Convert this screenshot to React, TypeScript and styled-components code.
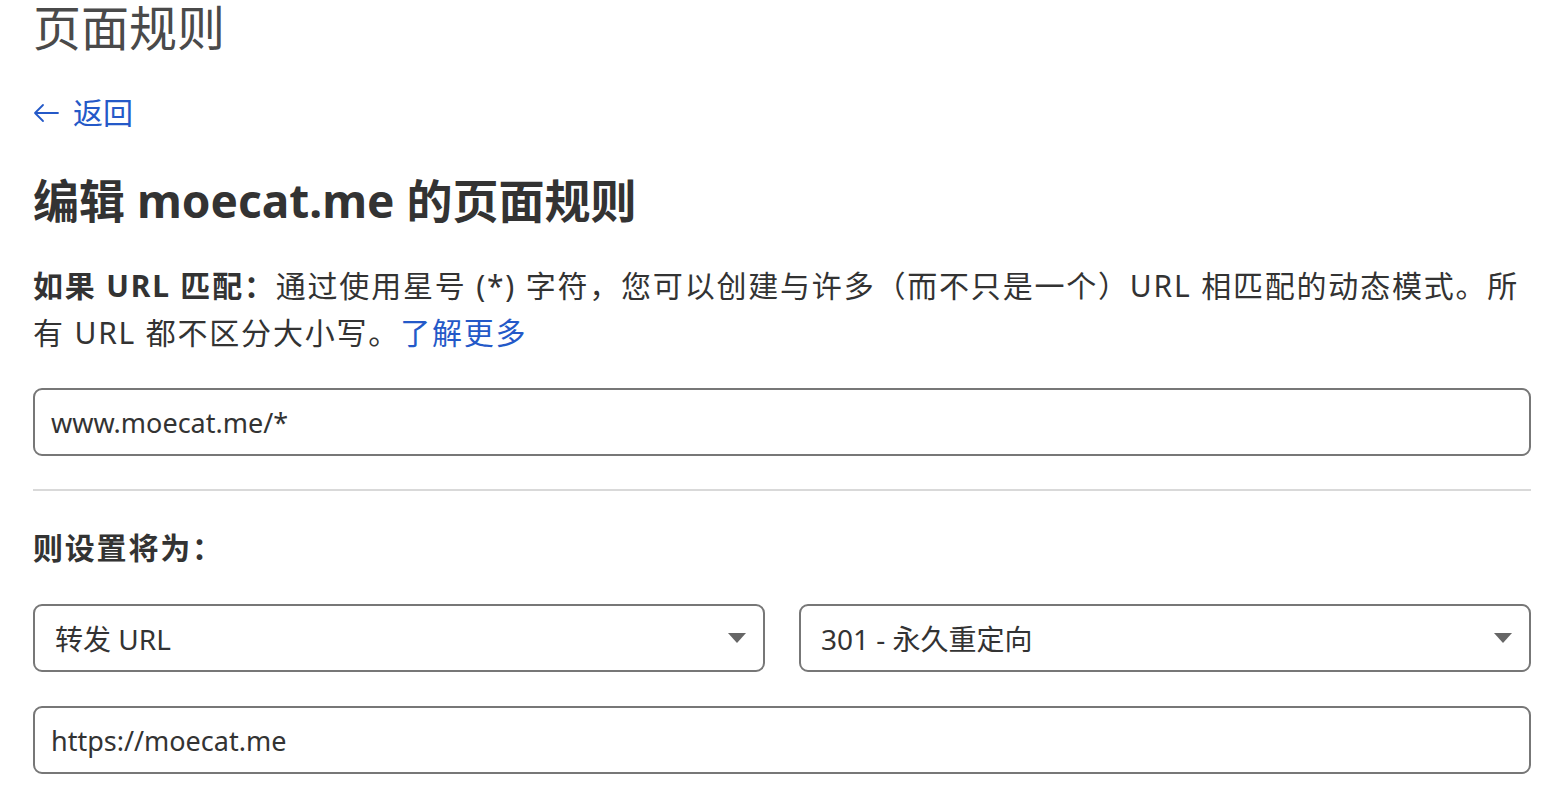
import styled, { createGlobalStyle } from "styled-components";

const GlobalStyle = createGlobalStyle`
  html, body {
    margin: 0;
    padding: 0;
    background: #ffffff;
  }
  body {
    font-family: "Noto Sans", "Noto Sans CJK SC", sans-serif;
    color: #333333;
  }
  * {
    box-sizing: border-box;
  }
`;

const Page = styled.div`
  padding: 0 15px 0 33px;
  display: flex;
  flex-direction: column;
`;

const PageTitle = styled.h1`
  margin: 0;
  font-size: 48px;
  line-height: 56px;
  font-weight: 400;
  color: #4a4a4a;
`;

const BackLink = styled.a`
  margin-top: 37px;
  display: flex;
  align-items: center;
  gap: 14px;
  font-size: 30px;
  line-height: 40px;
  color: #2459c8;
  text-decoration: none;
  cursor: pointer;
`;

const Heading = styled.h2`
  margin: 39px 0 0;
  font-size: 46px;
  line-height: 56px;
  font-weight: 700;
  color: #333333;
`;

const Description = styled.p`
  margin: 34px 0 0;
  font-size: 30px;
  line-height: 47px;
  letter-spacing: 1.8px;
  color: #333333;

  & strong {
    font-weight: 700;
  }
`;

const LearnMore = styled.a`
  color: #2459c8;
  text-decoration: none;
`;

const TextField = styled.div<{ $top: number }>`
  margin-top: ${({ $top }) => $top}px;
  height: 68px;
  border: 2px solid #777777;
  border-radius: 9px;
  display: flex;
  align-items: center;
  padding: 0 16px;
  font-size: 27px;
  color: #333333;
`;

const Divider = styled.hr`
  margin: 33px 0 0;
  border: none;
  height: 2px;
  background: #d9d9d9;
`;

const SectionLabel = styled.div`
  margin-top: 37px;
  font-size: 30px;
  line-height: 40px;
  letter-spacing: 1.8px;
  font-weight: 700;
  color: #333333;
`;

const SelectRow = styled.div`
  margin-top: 36px;
  display: grid;
  grid-template-columns: 1fr 1fr;
  gap: 34px;
`;

const Select = styled.div`
  height: 68px;
  border: 2px solid #777777;
  border-radius: 9px;
  display: flex;
  align-items: center;
  justify-content: space-between;
  padding: 0 17px 0 20px;
  font-size: 28px;
  color: #333333;
`;

const Caret = styled.span`
  width: 0;
  height: 0;
  border-left: 9px solid transparent;
  border-right: 9px solid transparent;
  border-top: 10px solid #666666;
`;

function ArrowLeft() {
  return (
    <svg width="26" height="26" viewBox="0 0 26 26" fill="none">
      <path
        d="M25 13H2M10 5L2 13l8 8"
        stroke="#2459c8"
        strokeWidth="1.8"
        strokeLinecap="round"
        strokeLinejoin="round"
      />
    </svg>
  );
}

export default function App() {
  return (
    <>
      <GlobalStyle />
      <Page>
        <PageTitle>页面规则</PageTitle>
        <BackLink>
          <ArrowLeft />
          返回
        </BackLink>
        <Heading>编辑 moecat.me 的页面规则</Heading>
        <Description>
          <strong>如果 URL 匹配：</strong>通过使用星号 (*) 字符，您可以创建与许多（而不只是一个）URL
          相匹配的动态模式。所有 URL 都不区分大小写。<LearnMore>了解更多</LearnMore>
        </Description>
        <TextField $top={32}>www.moecat.me/*</TextField>
        <Divider />
        <SectionLabel>则设置将为：</SectionLabel>
        <SelectRow>
          <Select>
            <span>转发 URL</span>
            <Caret />
          </Select>
          <Select>
            <span>301 - 永久重定向</span>
            <Caret />
          </Select>
        </SelectRow>
        <TextField $top={34}>https://moecat.me</TextField>
      </Page>
    </>
  );
}
